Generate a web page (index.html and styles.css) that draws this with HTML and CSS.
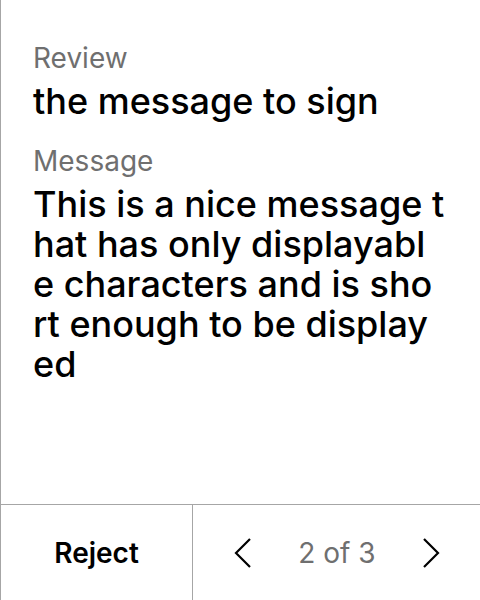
FILE: index.html
```html
<!DOCTYPE html>
<html>
<head>
<meta charset="utf-8">
<link rel="stylesheet" href="styles.css">
</head>
<body>
<div class="screen">
  <div class="content">
    <div class="field">
      <div class="label">Review</div>
      <div class="value">the message to sign</div>
    </div>
    <div class="field">
      <div class="label">Message</div>
      <div class="value wrap">This is a nice message that has only displayable characters and is short enough to be displayed</div>
    </div>
  </div>
  <div class="footer">
    <div class="reject">Reject</div>
    <div class="nav">
      <svg class="chev" width="20" height="32" viewBox="0 0 20 32"><polyline points="17,2 3,16 17,30" fill="none" stroke="#000" stroke-width="2.2"/></svg>
      <span class="page">2 of 3</span>
      <svg class="chev" width="20" height="32" viewBox="0 0 20 32"><polyline points="3,2 17,16 3,30" fill="none" stroke="#000" stroke-width="2.2"/></svg>
    </div>
  </div>
</div>
</body>
</html>
```

FILE: styles.css
```css
html, body {
  margin: 0;
  padding: 0;
  background: #fff;
}
.screen {
  width: 479px;
  height: 600px;
  border-left: 1px solid #a6a6a6;
  display: flex;
  flex-direction: column;
  font-family: Inter, "Noto Sans", sans-serif;
  color: #000;
}
.content {
  flex: 1;
  padding: 42px 34px 0 32px;
  display: flex;
  flex-direction: column;
  gap: 24px;
}
.field {
  display: flex;
  flex-direction: column;
  gap: 7px;
}
.label {
  font-size: 28px;
  line-height: 32px;
  color: #6f6f6f;
}
.value {
  font-size: 36px;
  line-height: 40px;
  font-weight: 500;
}
.wrap {
  word-break: break-all;
}
.footer {
  height: 95px;
  border-top: 1px solid #a6a6a6;
  display: flex;
}
.reject {
  width: 191px;
  display: flex;
  align-items: center;
  justify-content: center;
  font-size: 28px;
  font-weight: 600;
}
.nav {
  flex: 1;
  border-left: 1px solid #a6a6a6;
  display: flex;
  align-items: center;
  justify-content: space-between;
  padding: 0 39px 0 40px;
}
.page {
  font-size: 28px;
  color: #6f6f6f;
}
.chev {
  display: block;
}
```
